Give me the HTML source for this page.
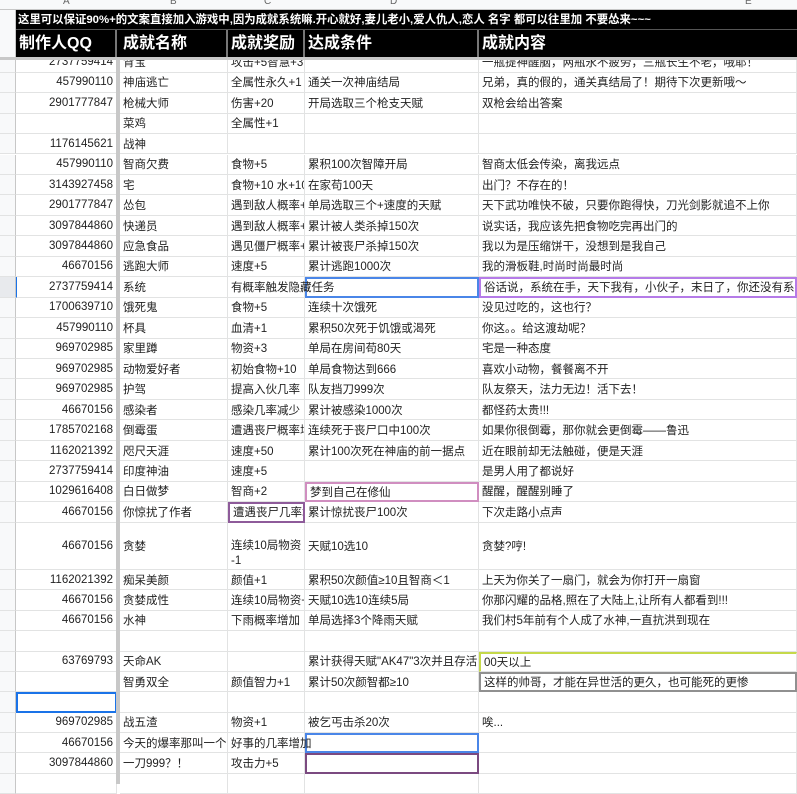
<!DOCTYPE html>
<html><head><meta charset="utf-8">
<style>
*{margin:0;padding:0;box-sizing:border-box}
body{width:797px;height:784px;overflow:hidden;background:#fff;position:relative;font-family:"Liberation Sans","Noto Sans CJK SC",sans-serif;font-size:11.5px;color:#222}
.r{position:absolute;left:0;width:797px}
.r>div{position:absolute;top:0;height:100%;border-right:1px solid #e2e3e3;border-bottom:1px solid #e2e3e3;white-space:nowrap;overflow:hidden;padding:0 3px;display:flex;align-items:center}
.h{left:0;width:16px;background:#f8f9fa;border-right:1px solid #c7c7c7!important}
.a{left:16px;width:101px;justify-content:flex-end}
.b{left:120px;width:108px}
.c{left:228px;width:77px}
.d{left:305px;width:174px}
.e{left:479px;width:318px}
.sep{position:absolute;left:116px;top:0;width:4px;height:784px;background:#c8c8c8;z-index:5}
.top{position:absolute;left:0;top:0;width:797px;height:10px;background:#f8f9fa;border-bottom:1px solid #c7c7c7;z-index:6;font-size:10px;color:#666;overflow:hidden}
.top span{position:absolute;top:-4px}
.t1{position:absolute;left:16px;top:10px;width:781px;height:20px;background:#000;color:#fff;font-weight:bold;font-size:11.4px;line-height:20px;padding-left:2px;z-index:6;white-space:nowrap;overflow:hidden;border-bottom:1px solid #555}
.t2{position:absolute;left:16px;top:30px;width:781px;height:27px;background:#000;color:#fff;font-weight:bold;font-size:16px;z-index:6}
.t2 div{position:absolute;top:0;height:27px;line-height:27px;padding-left:3px;border-right:2px solid #777}
.fz{position:absolute;left:0;top:57px;width:797px;height:3px;background:#c8c8c8;z-index:6}
.hl{position:absolute;left:0;top:10px;width:16px;height:47px;background:#f8f9fa;z-index:7;border-right:1px solid #c7c7c7}
</style></head><body>
<div class="top"><span style="left:63px">A</span><span style="left:170px">B</span><span style="left:264px">C</span><span style="left:390px">D</span><span style="left:745px">E</span></div>
<div class="hl"></div>
<div class="t1">这里可以保证90%+的文案直接加入游戏中,因为成就系统嘛.开心就好,妻儿老小,爱人仇人,恋人 名字 都可以往里加 不要怂来~~~</div>
<div class="t2"><div style="left:0;width:101px">制作人QQ</div><div style="left:104px;width:108px">成就名称</div><div style="left:212px;width:77px">成就奖励</div><div style="left:289px;width:174px">达成条件</div><div style="left:463px;width:318px;border:none">成就内容</div></div>
<div class="fz"></div>
<div class="sep"></div>

<div class="r" style="top:52px;height:20.7px"><div class="h"></div><div class="a">2737759414</div><div class="b">背宝</div><div class="c">攻击+5智慧+3</div><div class="d"></div><div class="e">一瓶提神醒脑，两瓶永不疲劳，三瓶长生不老，哦耶！</div></div>
<div class="r" style="top:72.7px;height:20.45px"><div class="h"></div><div class="a">457990110</div><div class="b">神庙逃亡</div><div class="c">全属性永久+1</div><div class="d">通关一次神庙结局</div><div class="e">兄弟，真的假的，通关真结局了！期待下次更新哦～</div></div>
<div class="r" style="top:93.15px;height:20.45px"><div class="h"></div><div class="a">2901777847</div><div class="b">枪械大师</div><div class="c">伤害+20</div><div class="d">开局选取三个枪支天赋</div><div class="e">双枪会给出答案</div></div>
<div class="r" style="top:113.6px;height:20.45px"><div class="h"></div><div class="a"></div><div class="b">菜鸡</div><div class="c">全属性+1</div><div class="d"></div><div class="e"></div></div>
<div class="r" style="top:134.05px;height:20.45px"><div class="h"></div><div class="a">1176145621</div><div class="b">战神</div><div class="c"></div><div class="d"></div><div class="e"></div></div>
<div class="r" style="top:154.5px;height:20.45px"><div class="h"></div><div class="a">457990110</div><div class="b">智商欠费</div><div class="c">食物+5</div><div class="d">累积100次智障开局</div><div class="e">智商太低会传染，离我远点</div></div>
<div class="r" style="top:174.95px;height:20.45px"><div class="h"></div><div class="a">3143927458</div><div class="b">宅</div><div class="c">食物+10 水+10</div><div class="d">在家苟100天</div><div class="e">出门？不存在的！</div></div>
<div class="r" style="top:195.4px;height:20.45px"><div class="h"></div><div class="a">2901777847</div><div class="b">怂包</div><div class="c">遇到敌人概率+</div><div class="d">单局选取三个+速度的天赋</div><div class="e">天下武功唯快不破，只要你跑得快，刀光剑影就追不上你</div></div>
<div class="r" style="top:215.85px;height:20.45px"><div class="h"></div><div class="a">3097844860</div><div class="b">快递员</div><div class="c">遇到敌人概率+</div><div class="d">累计被人类杀掉150次</div><div class="e">说实话，我应该先把食物吃完再出门的</div></div>
<div class="r" style="top:236.3px;height:20.45px"><div class="h"></div><div class="a">3097844860</div><div class="b">应急食品</div><div class="c">遇见僵尸概率+</div><div class="d">累计被丧尸杀掉150次</div><div class="e">我以为是压缩饼干，没想到是我自己</div></div>
<div class="r" style="top:256.75px;height:20.45px"><div class="h"></div><div class="a">46670156</div><div class="b">逃跑大师</div><div class="c">速度+5</div><div class="d">累计逃跑1000次</div><div class="e">我的滑板鞋,时尚时尚最时尚</div></div>
<div class="r" style="top:277.2px;height:20.45px"><div class="h" style="background:#e8eaed"></div><div class="a" style="border-left:1px solid #1a73e8">2737759414</div><div class="b">系统</div><div class="c" style="overflow:visible;z-index:2">有概率触发隐藏任务</div><div class="d" style="border:2px solid #4a86e8;z-index:1"></div><div class="e" style="border:2px solid #b57be8">俗话说，系统在手，天下我有，小伙子，末日了，你还没有系统</div></div>
<div class="r" style="top:297.65px;height:20.45px"><div class="h"></div><div class="a">1700639710</div><div class="b">饿死鬼</div><div class="c">食物+5</div><div class="d">连续十次饿死</div><div class="e">没见过吃的，这也行？</div></div>
<div class="r" style="top:318.1px;height:20.45px"><div class="h"></div><div class="a">457990110</div><div class="b">杯具</div><div class="c">血清+1</div><div class="d">累积50次死于饥饿或渴死</div><div class="e">你这。。给这渡劫呢？</div></div>
<div class="r" style="top:338.55px;height:20.45px"><div class="h"></div><div class="a">969702985</div><div class="b">家里蹲</div><div class="c">物资+3</div><div class="d">单局在房间苟80天</div><div class="e">宅是一种态度</div></div>
<div class="r" style="top:359px;height:20.45px"><div class="h"></div><div class="a">969702985</div><div class="b">动物爱好者</div><div class="c">初始食物+10</div><div class="d">单局食物达到666</div><div class="e">喜欢小动物，餐餐离不开</div></div>
<div class="r" style="top:379.45px;height:20.45px"><div class="h"></div><div class="a">969702985</div><div class="b">护驾</div><div class="c">提高入伙几率</div><div class="d">队友挡刀999次</div><div class="e">队友祭天，法力无边！活下去！</div></div>
<div class="r" style="top:399.9px;height:20.45px"><div class="h"></div><div class="a">46670156</div><div class="b">感染者</div><div class="c">感染几率减少</div><div class="d">累计被感染1000次</div><div class="e">都怪药太贵!!!</div></div>
<div class="r" style="top:420.35px;height:20.45px"><div class="h"></div><div class="a">1785702168</div><div class="b">倒霉蛋</div><div class="c">遭遇丧尸概率增</div><div class="d">连续死于丧尸口中100次</div><div class="e">如果你很倒霉，那你就会更倒霉——鲁迅</div></div>
<div class="r" style="top:440.8px;height:20.45px"><div class="h"></div><div class="a">1162021392</div><div class="b">咫尺天涯</div><div class="c">速度+50</div><div class="d">累计100次死在神庙的前一据点</div><div class="e">近在眼前却无法触碰，便是天涯</div></div>
<div class="r" style="top:461.25px;height:20.45px"><div class="h"></div><div class="a">2737759414</div><div class="b">印度神油</div><div class="c">速度+5</div><div class="d"></div><div class="e">是男人用了都说好</div></div>
<div class="r" style="top:481.7px;height:20.45px"><div class="h"></div><div class="a">1029616408</div><div class="b">白日做梦</div><div class="c">智商+2</div><div class="d" style="border:2px solid #d08ec0">梦到自己在修仙</div><div class="e">醒醒，醒醒别睡了</div></div>
<div class="r" style="top:502.15px;height:20.45px"><div class="h"></div><div class="a">46670156</div><div class="b">你惊扰了作者</div><div class="c" style="border:2px solid #8e5b9a">遭遇丧尸几率增</div><div class="d">累计惊扰丧尸100次</div><div class="e">下次走路小点声</div></div>
<div class="r" style="top:522.6px;height:47.4px"><div class="h"></div><div class="a">46670156</div><div class="b">贪婪</div><div class="c" style="align-items:flex-start;padding-top:16px;line-height:15px">连续10局物资<br>-1</div><div class="d">天赋10选10</div><div class="e">贪婪?哼!</div></div>
<div class="r" style="top:570px;height:20.3px"><div class="h"></div><div class="a">1162021392</div><div class="b">痴呆美颜</div><div class="c">颜值+1</div><div class="d">累积50次颜值≥10且智商＜1</div><div class="e">上天为你关了一扇门，就会为你打开一扇窗</div></div>
<div class="r" style="top:590.3px;height:20.3px"><div class="h"></div><div class="a">46670156</div><div class="b">贪婪成性</div><div class="c">连续10局物资+</div><div class="d">天赋10选10连续5局</div><div class="e">你那闪耀的品格,照在了大陆上,让所有人都看到!!!</div></div>
<div class="r" style="top:610.6px;height:20.4px"><div class="h"></div><div class="a">46670156</div><div class="b">水神</div><div class="c">下雨概率增加</div><div class="d">单局选择3个降雨天赋</div><div class="e">我们村5年前有个人成了水神,一直抗洪到现在</div></div>
<div class="r" style="top:631px;height:20.5px"><div class="h"></div><div class="a"></div><div class="b"></div><div class="c"></div><div class="d"></div><div class="e"></div></div>
<div class="r" style="top:651.5px;height:20.5px"><div class="h"></div><div class="a">63769793</div><div class="b">天命AK</div><div class="c"></div><div class="d">累计获得天赋"AK47"3次并且存活1</div><div class="e" style="border-top:2px solid #c5d94a;border-left:2px solid #c5d94a">00天以上</div></div>
<div class="r" style="top:672px;height:20.3px"><div class="h"></div><div class="a"></div><div class="b">智勇双全</div><div class="c">颜值智力+1</div><div class="d">累计50次颜智都≥10</div><div class="e" style="border:2px solid #909090">这样的帅哥，才能在异世活的更久，也可能死的更惨</div></div>
<div class="r" style="top:692.3px;height:20.3px"><div class="h"></div><div class="a" style="border:2px solid #1a73e8"></div><div class="b"></div><div class="c"></div><div class="d"></div><div class="e"></div></div>
<div class="r" style="top:712.6px;height:20.4px"><div class="h"></div><div class="a">969702985</div><div class="b">战五渣</div><div class="c">物资+1</div><div class="d">被乞丐击杀20次</div><div class="e">唉...</div></div>
<div class="r" style="top:733px;height:20.4px"><div class="h"></div><div class="a">46670156</div><div class="b">今天的爆率那叫一个高</div><div class="c" style="overflow:visible;z-index:2">好事的几率增加</div><div class="d" style="border:2px solid #4a86e8;z-index:1"></div><div class="e"></div></div>
<div class="r" style="top:753.4px;height:20.6px"><div class="h"></div><div class="a">3097844860</div><div class="b">一刀999？！</div><div class="c">攻击力+5</div><div class="d" style="border:2px solid #7b4a80"></div><div class="e"></div></div>
<div class="r" style="top:774px;height:20px"><div class="h"></div><div class="a"></div><div class="b"></div><div class="c"></div><div class="d"></div><div class="e"></div></div>
</body></html>
